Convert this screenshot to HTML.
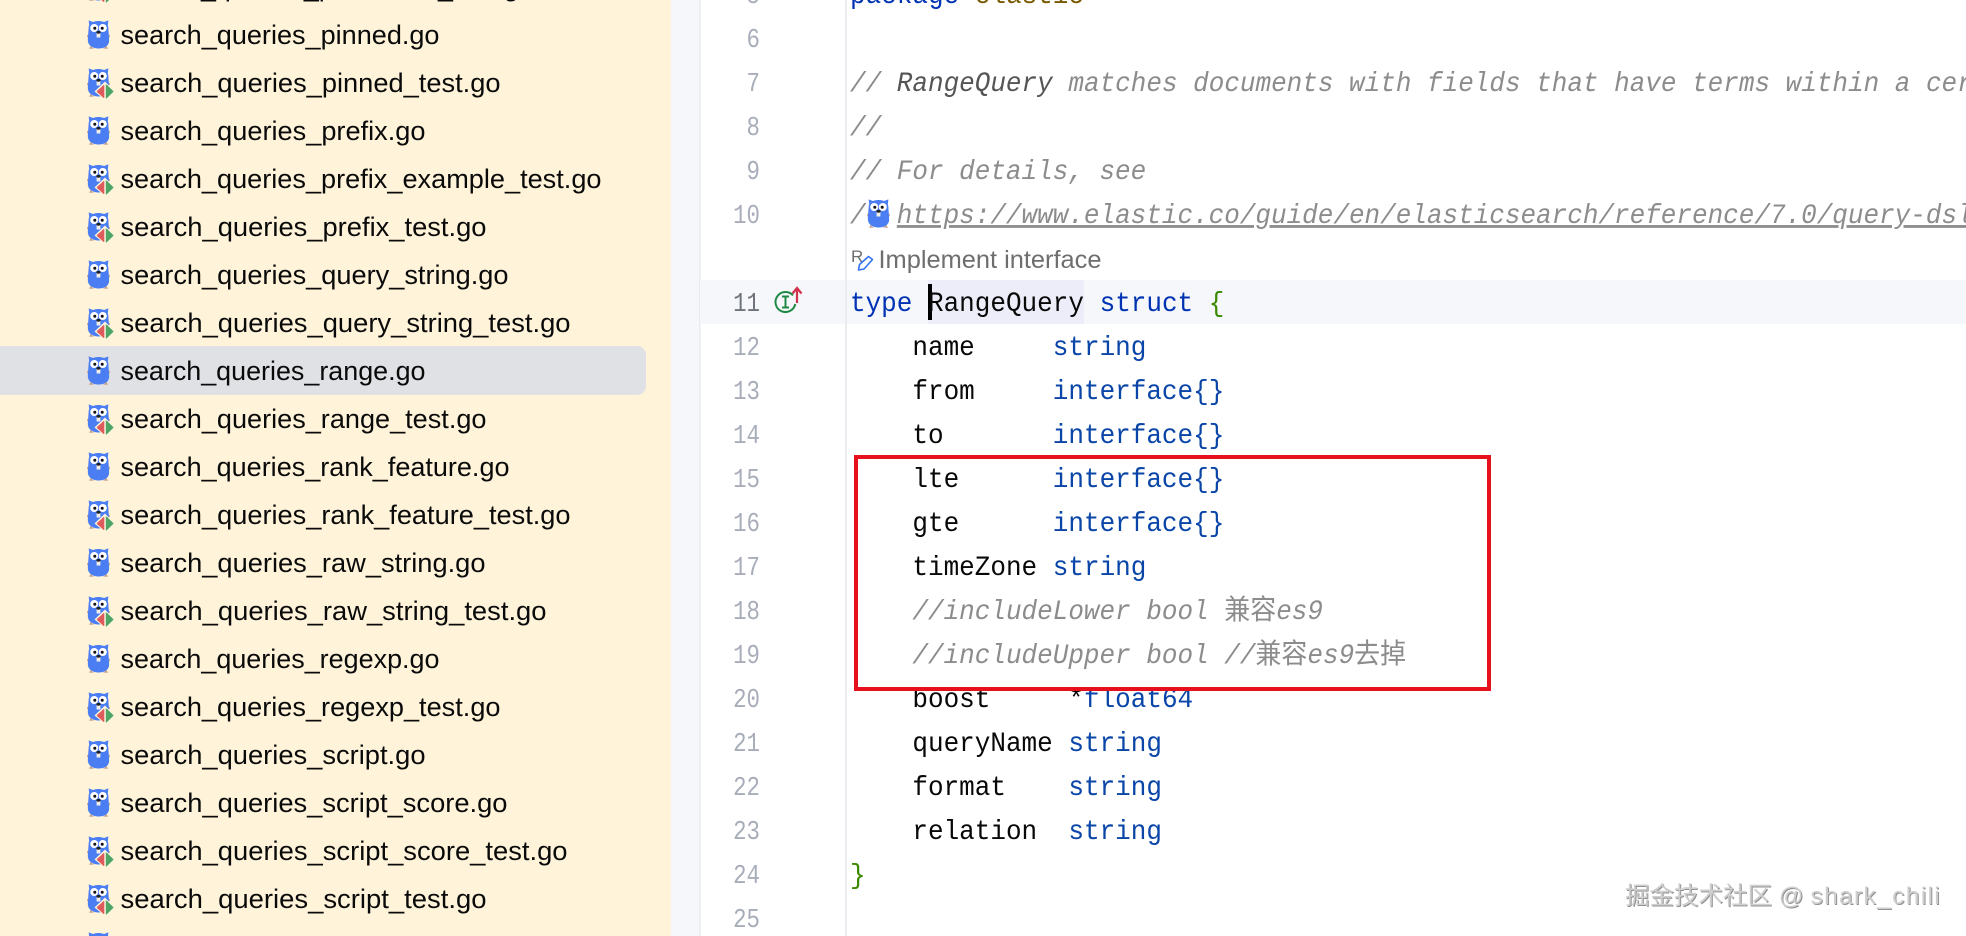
<!DOCTYPE html>
<html lang="zh">
<head>
<meta charset="utf-8">
<title>search_queries_range.go</title>
<style>
html,body{margin:0;padding:0;width:1966px;height:936px;overflow:hidden;background:#fff}
svg{position:absolute;left:0;top:0;display:block}
.f{font-family:"Liberation Sans","Noto Sans CJK SC",sans-serif;font-size:27px;fill:#0a0a0a}
.code text{font-family:"Liberation Mono","Noto Sans CJK SC",monospace;font-size:28px;fill:#080808}
.code .k{fill:#0033b3}
.code .t{fill:#0a45a8}
.code .g{fill:#3a8a00}
.code .p{fill:#7a5a00}
.code .c{fill:#8c8c8c;font-style:italic}
.code .d{fill:#555;font-style:italic}
.code .u{fill:#8c8c8c;font-style:italic;text-decoration:underline}
.code tspan.z{font-style:normal}
.n text{font-family:"Liberation Mono",monospace;font-size:27px;fill:#a8adba;text-anchor:end}
.wm{position:absolute;left:1625px;top:882px;font-family:"Liberation Sans","Noto Sans CJK SC",sans-serif;font-size:24.5px;line-height:30px;color:#cfcfcf;text-shadow:1px 1px 0 #929292;white-space:nowrap}
.wm span{letter-spacing:1.35px}
</style>
</head>
<body>
<svg width="1966" height="936" viewBox="0 0 1966 936" xmlns="http://www.w3.org/2000/svg">
<defs>
<g id="go">
<path d="M1 14.500c-1.400 .6-1.300 3 .5 3.200l2-1V14zM22 14.500c1.400 .6 1.300 3-.5 3.200l-2-1V14zM3.500 26l-1.500 2.700h5zM19.500 26l1.500 2.700h-5z" fill="#c9a392"/>
<path d="M1.600 .4l4.400 1.600C8 1.200 9.700 1 11.500 1s3.500 .2 5.500 1l4.400-1.600-.6 5c.4 1 .6 2.200 .6 3.500l.8 11.500c0 5.400-4.500 8.100-10.700 8.100S.8 25.300 .8 19.900l.8-11.500c0-1.300 .2-2.500 .6-3.500z" fill="#4a7ef2"/>
<circle cx="7.200" cy="8" r="4" fill="#fff"/><circle cx="15.800" cy="8" r="4" fill="#fff"/>
<circle cx="7.800" cy="8.200" r="1.500" fill="#111"/><circle cx="15.200" cy="8.200" r="1.500" fill="#111"/>
<rect x="9.600" y="13" width="3.800" height="4.500" fill="#f2efe8"/>
<ellipse cx="11.500" cy="12.300" rx="2.200" ry="1.400" fill="#222"/>
</g>
<g id="got">
<use href="#go"/>
<path d="M18 13.500L28 23.500 18 32 7.500 23.500z" fill="#fdf3de"/>
<path d="M16.800 17.500L10.200 23.500l6.600 6z" fill="#df5b5b" stroke="#df5b5b" stroke-width="1" stroke-linejoin="round"/>
<path d="M19.300 17L26 23.500l-6.700 6.500z" fill="#4fa566" stroke="#4fa566" stroke-width="1" stroke-linejoin="round"/>
</g>
</defs>

<!-- panels -->
<rect x="0" y="0" width="671" height="936" fill="#fff4da"/>
<rect x="671" y="0" width="28" height="936" fill="#f5f7fa"/>
<rect x="699" y="0" width="1.500" height="936" fill="#e9eaee"/>
<rect x="700" y="280" width="1266" height="44" fill="#f6f7fb"/>
<rect x="845" y="0" width="2" height="936" fill="#ebecf0"/>
<rect x="-10" y="346" width="656" height="49" rx="9" fill="#dfe1e5"/>

<!-- file tree icons -->
<use href="#got" x="87" y="-28"/>
<use href="#go" x="87" y="20"/>
<use href="#got" x="87" y="68"/>
<use href="#go" x="87" y="116"/>
<use href="#got" x="87" y="164"/>
<use href="#got" x="87" y="212"/>
<use href="#go" x="87" y="260"/>
<use href="#got" x="87" y="308"/>
<use href="#go" x="87" y="356"/>
<use href="#got" x="87" y="404"/>
<use href="#go" x="87" y="452"/>
<use href="#got" x="87" y="500"/>
<use href="#go" x="87" y="548"/>
<use href="#got" x="87" y="596"/>
<use href="#go" x="87" y="644"/>
<use href="#got" x="87" y="692"/>
<use href="#go" x="87" y="740"/>
<use href="#go" x="87" y="788"/>
<use href="#got" x="87" y="836"/>
<use href="#got" x="87" y="884"/>
<use href="#got" x="87" y="932"/>

<!-- file tree labels -->
<g class="tree" transform="translate(0,1)">
<text class="f" x="120.500" y="-5" textLength="413" lengthAdjust="spacingAndGlyphs">search_queries_percolator_test.go</text>
<text class="f" x="120.500" y="43" textLength="319" lengthAdjust="spacingAndGlyphs">search_queries_pinned.go</text>
<text class="f" x="120.500" y="91" textLength="380" lengthAdjust="spacingAndGlyphs">search_queries_pinned_test.go</text>
<text class="f" x="120.500" y="139" textLength="305" lengthAdjust="spacingAndGlyphs">search_queries_prefix.go</text>
<text class="f" x="120.500" y="187" textLength="481" lengthAdjust="spacingAndGlyphs">search_queries_prefix_example_test.go</text>
<text class="f" x="120.500" y="235" textLength="366" lengthAdjust="spacingAndGlyphs">search_queries_prefix_test.go</text>
<text class="f" x="120.500" y="283" textLength="388" lengthAdjust="spacingAndGlyphs">search_queries_query_string.go</text>
<text class="f" x="120.500" y="331" textLength="450" lengthAdjust="spacingAndGlyphs">search_queries_query_string_test.go</text>
<text class="f" x="120.500" y="379" textLength="305" lengthAdjust="spacingAndGlyphs">search_queries_range.go</text>
<text class="f" x="120.500" y="427" textLength="366" lengthAdjust="spacingAndGlyphs">search_queries_range_test.go</text>
<text class="f" x="120.500" y="475" textLength="389" lengthAdjust="spacingAndGlyphs">search_queries_rank_feature.go</text>
<text class="f" x="120.500" y="523" textLength="450" lengthAdjust="spacingAndGlyphs">search_queries_rank_feature_test.go</text>
<text class="f" x="120.500" y="571" textLength="365" lengthAdjust="spacingAndGlyphs">search_queries_raw_string.go</text>
<text class="f" x="120.500" y="619" textLength="426" lengthAdjust="spacingAndGlyphs">search_queries_raw_string_test.go</text>
<text class="f" x="120.500" y="667" textLength="319" lengthAdjust="spacingAndGlyphs">search_queries_regexp.go</text>
<text class="f" x="120.500" y="715" textLength="380" lengthAdjust="spacingAndGlyphs">search_queries_regexp_test.go</text>
<text class="f" x="120.500" y="763" textLength="305" lengthAdjust="spacingAndGlyphs">search_queries_script.go</text>
<text class="f" x="120.500" y="811" textLength="387" lengthAdjust="spacingAndGlyphs">search_queries_script_score.go</text>
<text class="f" x="120.500" y="859" textLength="447" lengthAdjust="spacingAndGlyphs">search_queries_script_score_test.go</text>
<text class="f" x="120.500" y="907" textLength="366" lengthAdjust="spacingAndGlyphs">search_queries_script_test.go</text>
</g>

<!-- line numbers -->
<g class="n" transform="translate(760,-1) scale(0.83,1)">
<text x="0" y="4">5</text>
<text x="0" y="48">6</text>
<text x="0" y="92">7</text>
<text x="0" y="136">8</text>
<text x="0" y="180">9</text>
<text x="0" y="224">10</text>
<text x="0" y="312" style="fill:#6f737c">11</text>
<text x="0" y="356">12</text>
<text x="0" y="400">13</text>
<text x="0" y="444">14</text>
<text x="0" y="488">15</text>
<text x="0" y="532">16</text>
<text x="0" y="576">17</text>
<text x="0" y="620">18</text>
<text x="0" y="664">19</text>
<text x="0" y="708">20</text>
<text x="0" y="752">21</text>
<text x="0" y="796">22</text>
<text x="0" y="840">23</text>
<text x="0" y="884">24</text>
<text x="0" y="928">25</text>
</g>

<!-- gutter icon line 11 -->
<path d="M793 295.400A10 10 0 1 0 795.300 304" fill="none" stroke="#1f8a46" stroke-width="2"/>
<path d="M782 296.500h7M782 307.500h7M785.500 296.500v11" fill="none" stroke="#1f8a46" stroke-width="2"/>
<path d="M797 303V288.500M792.500 293.500l4.500-5.500 4.500 5.500" fill="none" stroke="#d2324c" stroke-width="2.200"/>

<!-- selection + caret -->
<rect x="928" y="280" width="156" height="44" fill="#ededfa"/>
<rect x="928" y="284" width="4" height="36" fill="#000"/>

<!-- code -->
<g class="code" transform="translate(850,-1) scale(0.92857,1)">
<text x="0" y="4" class="k">package</text><text x="134.400" y="4" class="p">elastic</text>
<text x="0" y="92" class="c">//</text><text x="50.400" y="92" class="d">RangeQuery</text><text x="235.200" y="92" class="c">matches documents with fields that have terms within a certain</text>
<text x="0" y="136" class="c">//</text>
<text x="0" y="180" class="c">// For details, see</text>
<text x="0" y="224" class="c">/</text>
<text x="50.400" y="224" class="u">https://www.elastic.co/guide/en/elasticsearch/reference/7.0/query-dsl-range-query.html</text>
<text x="0" y="312" class="k">type</text><text x="84" y="312">RangeQuery</text><text x="268.800" y="312" class="k">struct</text><text x="386.400" y="312" class="g">{</text>
<text x="67.200" y="356">name</text><text x="218.400" y="356" class="t">string</text>
<text x="67.200" y="400">from</text><text x="218.400" y="400" class="t">interface{}</text>
<text x="67.200" y="444">to</text><text x="218.400" y="444" class="t">interface{}</text>
<text x="67.200" y="488">lte</text><text x="218.400" y="488" class="t">interface{}</text>
<text x="67.200" y="532">gte</text><text x="218.400" y="532" class="t">interface{}</text>
<text x="67.200" y="576">timeZone</text><text x="218.400" y="576" class="t">string</text>
<text x="67.200" y="620" class="c">//includeLower bool <tspan class="z">兼容</tspan>es9</text>
<text x="67.200" y="664" class="c">//includeUpper bool //<tspan class="z">兼容</tspan>es9<tspan class="z">去掉</tspan></text>
<text x="67.200" y="708">boost</text><text x="235.200" y="708">*</text><text x="252" y="708" class="t">float64</text>
<text x="67.200" y="752">queryName</text><text x="235.200" y="752" class="t">string</text>
<text x="67.200" y="796">format</text><text x="235.200" y="796" class="t">string</text>
<text x="67.200" y="840">relation</text><text x="235.200" y="840" class="t">string</text>
<text x="0" y="884" class="g">}</text>
</g>

<!-- go icon inside comment -->
<use href="#go" x="867" y="199"/>

<!-- inlay hint -->
<text x="851" y="262" style="font-family:'Liberation Sans',sans-serif;font-size:17px;fill:#6e6e6e">R</text>
<path d="M868.500 256.500l4 3-8.500 9.500-5.500 1 1-5.500z" fill="#fff" stroke="#3574f0" stroke-width="1.600" stroke-linejoin="round"/>
<text x="878.500" y="268" textLength="223" lengthAdjust="spacingAndGlyphs" style="font-family:'Liberation Sans',sans-serif;font-size:25px;fill:#6e6e6e">Implement interface</text>

<!-- red box -->
<rect x="856" y="457" width="633" height="232" fill="none" stroke="#e60f1c" stroke-width="4"/>
</svg>
<div class="wm">掘金技术社区 @ <span>shark_chili</span></div>
</body>
</html>
